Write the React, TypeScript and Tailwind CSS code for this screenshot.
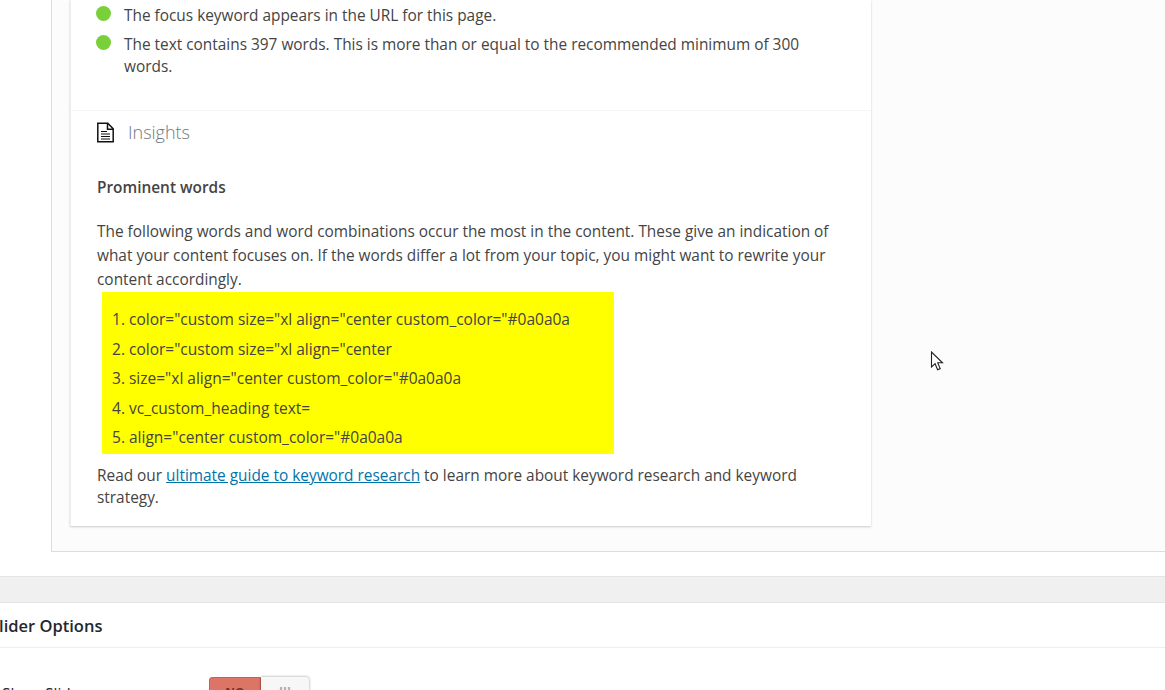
import React from "react";

const Check = ({ children }: { children: React.ReactNode }) => (
  <li className="flex">
    <span className="mt-[1px] h-[15px] w-[15px] shrink-0 rounded-full bg-[#7ad03a]" />
    <span className="ml-[13px] w-[690px] leading-[22px]">{children}</span>
  </li>
);

const words = [
  'color="custom size="xl align="center custom_color="#0a0a0a',
  'color="custom size="xl align="center',
  'size="xl align="center custom_color="#0a0a0a',
  "vc_custom_heading text=",
  'align="center custom_color="#0a0a0a',
];

export default function App() {
  return (
    <div className="relative h-[690px] w-full overflow-hidden bg-white font-['Open_Sans',sans-serif] text-[15.4px] text-[#444]">
      {/* Analysis panel */}
      <div className="ml-[51px] h-[552px] border-b border-l border-[#ddd] bg-[#fcfcfc] pl-[18px]">
        <div className="h-[526px] w-[801px] border-l border-[#eee] bg-white shadow-[0_1px_2px_rgba(0,0,0,0.2)]">
          <ul className="flex h-[111px] flex-col gap-[7px] border-b border-[#f5f5f5] pl-[25px] pt-[5px]">
            <Check>The focus keyword appears in the URL for this page.</Check>
            <Check>
              The text contains 397 words. This is more than or equal to the recommended minimum of 300 words.
            </Check>
          </ul>

          <div className="flex h-[43px] items-center pl-[26px]">
            <svg width="17" height="21" viewBox="0 0 17 21" fill="none" stroke="#111" strokeWidth="1.5">
              <path d="M.8 1.2h10l5.4 5.5v13H.8z" />
              <path d="M10.5 1.2v6h5.7" />
              <path d="M4 9.5h6M4 12h9M4 14.5h9M4 17h9" strokeWidth="1.2" />
            </svg>
            <h2 className="ml-[14px] text-[18px] font-light text-[#6f7a80]">Insights</h2>
          </div>

          <div className="pl-[26px] pr-[29px]">
            <p className="mt-[23px] font-semibold leading-[22px]">Prominent words</p>
            <p className="mt-[21px] w-[745px] leading-[24px]">
              The following words and word combinations occur the most in the content. These give an indication of what
              your content focuses on. If the words differ a lot from your topic, you might want to rewrite your content
              accordingly.
            </p>
            <ol className="ml-[5px] mt-[0px] flex h-[162px] w-[512px] flex-col gap-[7.5px] bg-[#ff0] pl-[10px] pt-[16px] text-[15.5px]">
              {words.map((w, i) => (
                <li key={w} className="leading-[22px]">
                  {i + 1}. {w}
                </li>
              ))}
            </ol>
            <p className="mt-[11px] w-[745px] leading-[22px]">
              Read our{" "}
              <a href="#" className="text-[#0073aa] underline">
                ultimate guide to keyword research
              </a>{" "}
              to learn more about keyword research and keyword strategy.
            </p>
          </div>
        </div>
      </div>

      {/* Slider options box */}
      <div className="mt-[24px] h-[27px] border-y border-[#e5e5e5] bg-[#f0f0f0]" />
      <div className="flex h-[45px] items-center border-b border-[#eee]">
        <h3 className="ml-[-10px] pt-[2px] text-[16.5px] font-semibold text-[#23282d]">Slider Options</h3>
      </div>
      <div className="flex pt-[29px]">
        <span className="ml-[2px] w-[207px] pt-[6px] text-[#23282d]">Show Slider</span>
        <div className="flex h-[30px] w-[100px] text-[12px] font-bold">
          <span className="w-[52px] rounded-l-[3px] border border-[#c9604f] bg-[#dd7566] pt-[6px] text-center text-[#7a2f22]">
            NO
          </span>
          <span className="w-[48px] rounded-r-[3px] bg-[#f7f7f7] pt-[6px] text-center text-[#aaa] shadow-[0_0_3px_rgba(0,0,0,0.4)]">
            III
          </span>
        </div>
      </div>

      {/* Mouse pointer */}
      <svg className="absolute left-[930px] top-[351px]" width="15" height="22" viewBox="0 0 15 22">
        <path d="M1.5 1v15l3.6-3.3 2.5 6 2.6-1.1-2.5-5.8h4.8z" fill="#fff" stroke="#222" strokeWidth="1.1" />
      </svg>
    </div>
  );
}
